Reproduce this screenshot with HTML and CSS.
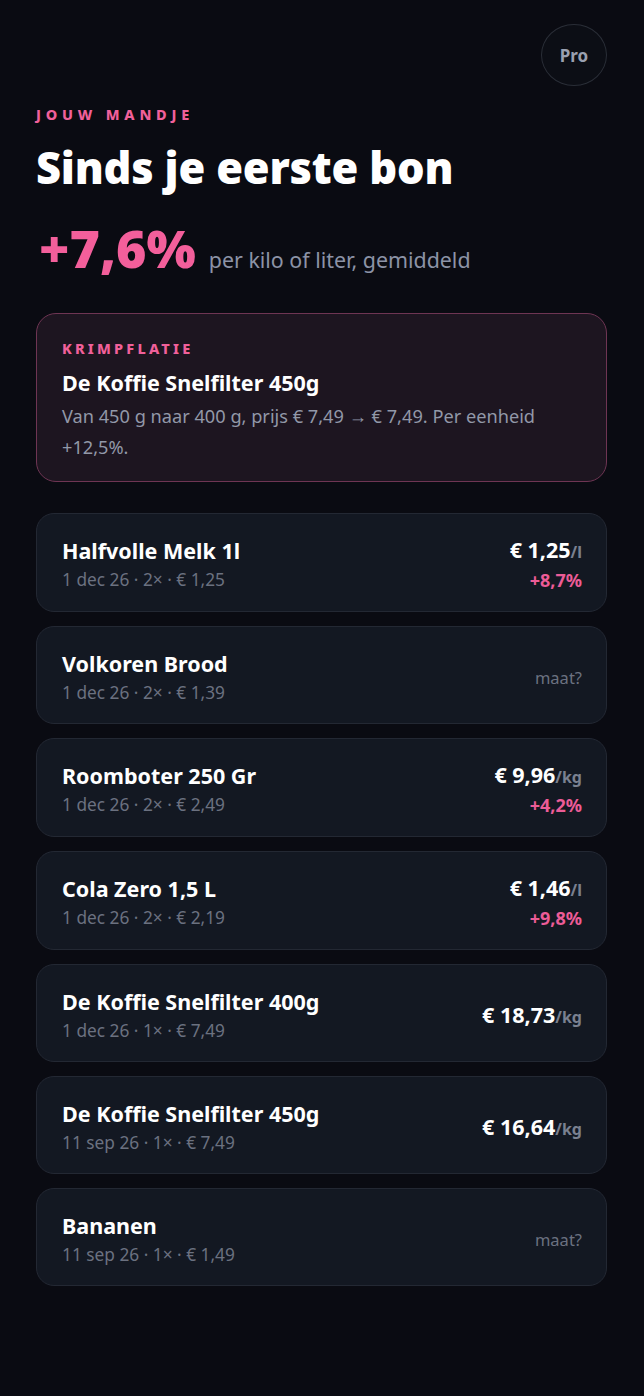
FILE: index.html
```html
<!DOCTYPE html>
<html lang="nl">
<head>
<meta charset="utf-8">
<link rel="stylesheet" href="styles.css">
</head>
<body>
<div class="page">
  <div class="top"><button class="pro">Pro</button></div>
  <div class="eyebrow">JOUW MANDJE</div>
  <h1 class="title">Sinds je eerste bon</h1>
  <div class="stat"><span class="big">+7,6%</span><span class="stat-sub">per kilo of liter, gemiddeld</span></div>

  <div class="alert">
    <div class="alert-label">KRIMPFLATIE</div>
    <div class="alert-title">De Koffie Snelfilter 450g</div>
    <div class="alert-text">Van 450 g naar 400 g, prijs € 7,49 → € 7,49. Per eenheid +12,5%.</div>
  </div>

  <div class="list">
    <div class="item">
      <div class="left"><div class="name">Halfvolle Melk 1l</div><div class="meta">1 dec 26 · 2× · € 1,25</div></div>
      <div class="right"><div class="price">€ 1,25<span class="unit">/l</span></div><div class="pct">+8,7%</div></div>
    </div>
    <div class="item">
      <div class="left"><div class="name">Volkoren Brood</div><div class="meta">1 dec 26 · 2× · € 1,39</div></div>
      <div class="right"><div class="maat">maat?</div></div>
    </div>
    <div class="item">
      <div class="left"><div class="name">Roomboter 250 Gr</div><div class="meta">1 dec 26 · 2× · € 2,49</div></div>
      <div class="right"><div class="price">€ 9,96<span class="unit">/kg</span></div><div class="pct">+4,2%</div></div>
    </div>
    <div class="item">
      <div class="left"><div class="name">Cola Zero 1,5 L</div><div class="meta">1 dec 26 · 2× · € 2,19</div></div>
      <div class="right"><div class="price">€ 1,46<span class="unit">/l</span></div><div class="pct">+9,8%</div></div>
    </div>
    <div class="item">
      <div class="left"><div class="name">De Koffie Snelfilter 400g</div><div class="meta">1 dec 26 · 1× · € 7,49</div></div>
      <div class="right"><div class="price">€ 18,73<span class="unit">/kg</span></div></div>
    </div>
    <div class="item">
      <div class="left"><div class="name">De Koffie Snelfilter 450g</div><div class="meta">11 sep 26 · 1× · € 7,49</div></div>
      <div class="right"><div class="price">€ 16,64<span class="unit">/kg</span></div></div>
    </div>
    <div class="item">
      <div class="left"><div class="name">Bananen</div><div class="meta">11 sep 26 · 1× · € 1,49</div></div>
      <div class="right"><div class="maat">maat?</div></div>
    </div>
  </div>
</div>
</body>
</html>
```
FILE: styles.css
```css
* { box-sizing: border-box; }
html, body { margin: 0; padding: 0; background: #0a0b12; }
body { font-family: "Noto Sans", "Open Sans", sans-serif; color: #fff; }
.page { padding: 24px 37px 40px 36px; }
.top { display: flex; justify-content: flex-end; }
.pro {
  width: 66px; height: 62px; border-radius: 50%;
  border: 1px solid #2a2e37; background: #0c0e15;
  color: #9aa0b0; font-family: "Noto Sans", sans-serif;
  font-size: 17px; font-weight: 700; padding: 0;
}
.eyebrow {
  margin-top: 18px; color: #f0609a; font-size: 14.5px; font-weight: 800;
  letter-spacing: 4.8px; line-height: 20px;
}
.title {
  margin: 16px 0 0; font-size: 43.4px; font-weight: 900; line-height: 56px;
  letter-spacing: -0.2px;
}
.stat { display: flex; align-items: baseline; gap: 13px; margin-top: 20px; }
.big { color: #f35f9b; font-size: 52px; font-weight: 900; line-height: 64px; padding-left: 3px; }
.stat-sub { color: #8c93a6; font-size: 21.4px; }
.alert {
  margin-top: 33px; border: 1px solid #6e3553; background: #1d1520;
  border-radius: 20px; padding: 24px 25px 18px;
}
.alert-label { color: #f0609a; font-size: 14.5px; font-weight: 800; letter-spacing: 3.2px; line-height: 20px; }
.alert-title { margin-top: 11px; font-size: 21.5px; font-weight: 700; line-height: 28px; }
.alert-text { margin-top: 4px; color: #9298a8; font-size: 18.2px; line-height: 31px; }
.list { display: flex; flex-direction: column; gap: 14px; margin-top: 31px; }
.item {
  display: flex; justify-content: space-between; align-items: center;
  background: #131822; border: 1px solid #232833; border-radius: 18px;
  padding: 22px 24px 18px 25px; min-height: 98px;
}
.name { font-size: 21.5px; font-weight: 700; line-height: 28px; }
.meta { color: #6b7180; font-size: 17.3px; line-height: 24px; margin-top: 3px; }
.right { text-align: right; }
.price { font-size: 21.5px; font-weight: 700; line-height: 28px; }
.unit { color: #7a8090; font-size: 16px; font-weight: 700; line-height: 1; }
.pct { color: #ec5c97; font-size: 18px; font-weight: 700; line-height: 26px; margin-top: 3px; }
.maat { color: #6b7180; font-size: 16.5px; }
```
